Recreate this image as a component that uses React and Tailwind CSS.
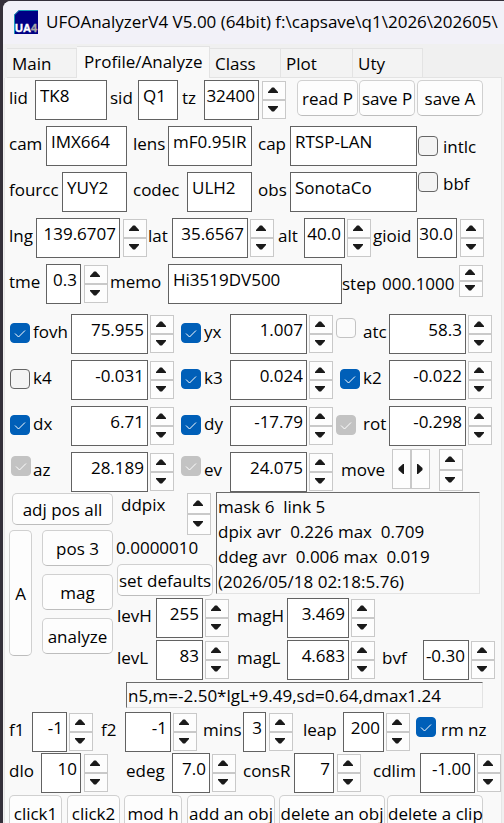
import { useId, useState } from "react";
import clsx from "clsx";

const Triangle = ({ dir }) => (
    <svg viewBox="0 0 10 6" className="w-[10px] h-[6px]" fill="#1a1a1a">
        {dir === "up" ? (
            <path d="M0 6V5L4 0.5H6L10 5V6Z" />
        ) : (
            <path d="M0 0V1L4 5.5H6L10 1V0Z" />
        )}
    </svg>
);

const spinButton =
    "flex-1 flex items-center justify-center bg-[#fdfdfd] border border-[#c9c9c9]";

const Spin = ({ name, onStep, className = "h-[38px]" }) => (
    <div className={clsx("flex flex-col w-6 shrink-0 mt-px", className)}>
        <button
            type="button"
            aria-label={`${name} up`}
            className={clsx(spinButton, "pb-[2px] pr-[2px]")}
            onClick={() => onStep?.(1)}
        >
            <Triangle dir="up" />
        </button>
        <button
            type="button"
            aria-label={`${name} down`}
            className={clsx(spinButton, "pb-[2px] pr-[2px]")}
            onClick={() => onStep?.(-1)}
        >
            <Triangle dir="down" />
        </button>
    </div>
);

const Row = ({ className, children }) => (
    <div className={clsx("flex items-start h-10 shrink-0", className)}>
        {children}
    </div>
);

const Field = ({ label, labelClass, inputClass, value }) => {
    const id = useId();
    return (
        <>
            <label
                htmlFor={id}
                className={clsx("shrink-0 pt-[6px]", labelClass)}
            >
                {label}
            </label>
            <input
                id={id}
                type="text"
                defaultValue={value}
                className={clsx(
                    "h-10 shrink-0 bg-white border border-[#626262] pb-[10px] pl-1 outline-none",
                    inputClass
                )}
            />
        </>
    );
};

const NumberField = ({
    label,
    labelClass,
    inputClass,
    value,
    spinClass = "ml-[2px]",
}) => {
    const inputId = useId();
    const [current, setCurrent] = useState(value);
    const decimals = (value.split(".")[1] ?? "").length;

    const step = (sign) => {
        const next = Number(current) + sign / 10 ** decimals;
        setCurrent(next.toFixed(decimals));
    };

    return (
        <>
            {labelClass && (
                <label
                    htmlFor={inputId}
                    className={clsx("shrink-0 pt-[6px]", labelClass)}
                >
                    {label}
                </label>
            )}
            <input
                id={inputId}
                type="text"
                aria-label={labelClass ? undefined : `${label} value`}
                value={current}
                onChange={(e) => setCurrent(e.target.value)}
                className={clsx(
                    "h-10 shrink-0 bg-white border border-[#626262] pb-[10px] pr-[3px] text-right outline-none",
                    inputClass
                )}
            />
            <div className={clsx("shrink-0", spinClass)}>
                <Spin name={label} onStep={step} />
            </div>
        </>
    );
};

const Check = ({
    label,
    checked = false,
    disabled = false,
    className,
    boxClass = "mt-[9px]",
    textClass = "ml-[3px] pt-[6px]",
}) => (
    <label className={clsx("flex items-start shrink-0", className)}>
        <span className={clsx("grid shrink-0", boxClass)}>
            <input
                type="checkbox"
                defaultChecked={checked}
                disabled={disabled}
                className="peer appearance-none col-start-1 row-start-1 size-5 rounded-[4px] border border-[#666] bg-[#f4f4f4] checked:border-[#005fb8] checked:bg-[#005fb8] disabled:border-[#c3c3c3] disabled:bg-[#fbfbfb] disabled:checked:bg-[#c3c3c3]"
            />
            <svg
                viewBox="0 0 20 20"
                className="col-start-1 row-start-1 size-5 pointer-events-none invisible peer-checked:visible"
                fill="none"
                stroke="#fff"
                strokeWidth="1"
            >
                <path d="M5 10.5L8.500 14L15 7.500" />
            </svg>
        </span>
        <span className={textClass}>{label}</span>
    </label>
);

const Button = ({ className, children }) => (
    <button
        type="button"
        className={clsx(
            "shrink-0 rounded-[5px] border border-[#d0d0d0] border-b-[#bdbdbd] bg-[#fdfdfd] pt-px text-center",
            className
        )}
    >
        {children}
    </button>
);

const Logo = () => (
    <svg viewBox="0 0 24 24" className="size-6 shrink-0">
        <path d="M5 0H24V24H0V5Z" fill="#000084" />
        <path d="M0.500 24V5L5 0.500H24" stroke="#1797b5" fill="none" />
        <text
            x="1"
            y="22"
            fontFamily="Liberation Sans"
            fontWeight="700"
            fontSize="11"
            fill="#fff"
            stroke="#fff"
            strokeWidth="0.400"
        >
            UA
            <tspan fill="#a8a8a8" stroke="#a8a8a8">
                4
            </tspan>
        </text>
    </svg>
);

const calibration = [
    [
        { label: "fovh", value: "75.955", checked: true },
        { label: "yx", value: "1.007", checked: true },
        { label: "atc", value: "58.3", disabled: true },
    ],
    [
        { label: "k4", value: "-0.031" },
        { label: "k3", value: "0.024", checked: true },
        { label: "k2", value: "-0.022", checked: true },
    ],
    [
        { label: "dx", value: "6.71", checked: true },
        { label: "dy", value: "-17.79", checked: true },
        { label: "rot", value: "-0.298", checked: true, disabled: true },
    ],
];

const columnClass = ["w-[62px] pl-px", "ml-[7px] w-[49px]", "ml-[3px] w-[53px]"];

const tabs = [
    { name: "Main", className: "w-[70px]" },
    { name: "Profile/Analyze", className: "w-[133px]", active: true },
    { name: "Class", className: "w-[71px]" },
    { name: "Plot", className: "w-[72px]" },
    { name: "Uty", className: "w-[70px]" },
];

const Tabs = () => (
    <div role="tablist" className="flex items-end h-8 pl-[3px]">
        {tabs.map((tab) => (
            <button
                key={tab.name}
                type="button"
                role="tab"
                aria-selected={!!tab.active}
                className={clsx(
                    "shrink-0 border-t border-r border-[#e3e3e3] text-left",
                    tab.active
                        ? "h-8 bg-[#f9f9f9] pl-[7px] pb-[2px]"
                        : "h-[30px] bg-[#f3f3f3] pl-[5px] pt-px border-b",
                    tab.className
                )}
            >
                {tab.name}
            </button>
        ))}
        <div className="flex-1 self-stretch border-b border-[#e3e3e3]" />
    </div>
);

const Station = () => (
    <div className="flex flex-col gap-[6px]">
        <Row>
            <Field label="lid" value="TK8" labelClass="w-[26px]" inputClass="w-[72px]" />
            <Field label="sid" value="Q1" labelClass="ml-[3px] w-7" inputClass="w-10" />
            <NumberField
                label="tz"
                value="32400"
                labelClass="ml-1 w-[22px]"
                inputClass="w-[55px]"
                spinClass="ml-[3px]"
            />
            <Button className="ml-[11px] w-[61px] h-9">read P</Button>
            <Button className="ml-px w-14 h-9">save P</Button>
            <Button className="ml-[2px] w-[66px] h-9">save A</Button>
        </Row>
        <Row>
            <Field label="cam" value="IMX664" labelClass="w-[37px]" inputClass="w-[81px]" />
            <Field label="lens" value="mF0.95IR" labelClass="ml-[6px] w-[35px]" inputClass="w-[84px]" />
            <Field label="cap" value="RTSP-LAN" labelClass="ml-[6px] w-8" inputClass="w-[127px]" />
            <Check
                label="intlc"
                className="ml-px"
                boxClass="mt-[10px]"
                textClass="ml-[5px] pt-[9px]"
            />
        </Row>
        <Row>
            <Field label="fourcc" value="YUY2" labelClass="w-[53px]" inputClass="w-[65px]" />
            <Field label="codec" value="ULH2" labelClass="ml-[6px] w-[54px]" inputClass="w-[65px]" />
            <Field label="obs" value="SonotaCo" labelClass="ml-[6px] w-8" inputClass="w-[127px]" />
            <Check label="bbf" className="ml-px" boxClass="" textClass="ml-[5px]" />
        </Row>
        <Row>
            <NumberField
                label="lng"
                value="139.6707"
                labelClass="w-[27px]"
                inputClass="w-[84px]"
                spinClass="ml-[3px]"
            />
            <NumberField label="lat" value="35.6567" labelClass="ml-px w-6" inputClass="w-[76px]" />
            <NumberField label="alt" value="40.0" labelClass="ml-1 w-[26px]" inputClass="w-[41px]" />
            <NumberField
                label="gioid"
                value="30.0"
                labelClass="ml-[2px] w-11"
                inputClass="w-10"
                spinClass="ml-[3px]"
            />
        </Row>
        <Row>
            <NumberField
                label="tme"
                value="0.3"
                labelClass="w-[37px]"
                inputClass="w-[35px]"
                spinClass="ml-[3px]"
            />
            <Field label="memo" value="Hi3519DV500" labelClass="ml-[2px] w-[58px]" inputClass="w-[174px]" />
            <span className="w-10 shrink-0 pt-2">step</span>
            <output className="w-[77px] shrink-0 pt-2">000.1000</output>
            <Spin name="step" className="h-8" />
        </Row>
    </div>
);

const Calibration = () => (
    <div className="mt-[10px] flex flex-col gap-[6px]">
        {calibration.map((row, i) => (
            <Row key={i}>
                {row.map((item, j) => (
                    <div key={item.label} className="flex items-start shrink-0">
                        <Check
                            label={item.label}
                            checked={item.checked}
                            disabled={item.disabled}
                            className={clsx(
                                columnClass[j],
                                item.label === "k2" && "pl-1"
                            )}
                            boxClass={item.label === "atc" ? "mt-1" : "mt-[9px]"}
                            textClass={clsx(
                                "pt-[6px]",
                                item.disabled ? "ml-[7px]" : "ml-[3px]"
                            )}
                        />
                        <NumberField
                            label={item.label}
                            value={item.value}
                            inputClass="w-[77px]"
                        />
                    </div>
                ))}
            </Row>
        ))}
        <Row>
            <Check
                label="az"
                checked
                disabled
                className="w-[62px] pl-[2px]"
                boxClass="mt-1"
                textClass="ml-[2px] pt-[6px]"
            />
            <NumberField label="az" value="28.189" inputClass="w-[77px]" />
            <Check
                label="ev"
                checked
                disabled
                className="ml-[7px] w-[49px]"
                boxClass="mt-1"
            />
            <NumberField label="ev" value="24.075" inputClass="w-[77px]" />
            <span className="ml-2 w-[51px] shrink-0 pt-[6px]">move</span>
            <div className="-mt-[3px] flex h-10 w-[38px] shrink-0">
                <button
                    type="button"
                    aria-label="move left"
                    className={clsx(spinButton, "pr-px")}
                >
                    <svg viewBox="0 0 6 10" className="h-[10px] w-[6px]" fill="#1a1a1a">
                        <path d="M6 0H5L0.500 4V6L5 10H6Z" />
                    </svg>
                </button>
                <button
                    type="button"
                    aria-label="move right"
                    className={clsx(spinButton, "pr-px")}
                >
                    <svg viewBox="0 0 6 10" className="h-[10px] w-[6px]" fill="#1a1a1a">
                        <path d="M0 0H1L5.500 4V6L1 10H0Z" />
                    </svg>
                </button>
            </div>
            <div className="-mt-1 ml-[9px]">
                <Spin name="move" className="h-[42px]" />
            </div>
        </Row>
    </div>
);

const report = `mask 6  link 5
dpix avr  0.226 max  0.709
ddeg avr  0.006 max  0.019
(2026/05/18 02:18:5.76)`;

const Adjust = () => (
    <div className="flex items-start">
        <div className="flex w-[104px] shrink-0 flex-col gap-[5px] pt-px">
            <Button className="ml-[3px] h-8">adj pos all</Button>
            <div className="flex justify-between">
                <Button className="w-[23px] h-[126px]">A</Button>
                <div className="flex w-[71px] flex-col gap-2">
                    <Button className="h-9">pos 3</Button>
                    <Button className="h-9">mag</Button>
                    <Button className="h-9">analyze</Button>
                </div>
            </div>
        </div>
        <div className="flex flex-1 flex-col">
            <div className="flex items-start">
                <div className="flex w-[103px] shrink-0 flex-col pl-[3px]">
                    <div className="flex h-11 items-start justify-between px-[5px]">
                        <span className="pt-px">ddpix</span>
                        <Spin name="ddpix" className="h-[42px]" />
                    </div>
                    <output className="h-7">0.0000010</output>
                    <Button className="ml-px h-8 w-24">set defaults</Button>
                </div>
                <div className="mr-[21px] h-[102px] flex-1 whitespace-pre border border-[#e3e3e3] border-t-[#6b6b6b] border-l-[#6b6b6b] pl-px pt-px leading-[25px]">
                    {report}
                </div>
            </div>
            <div className="mt-[2px] flex flex-col gap-[2px] pl-1">
                <Row>
                    <NumberField label="levH" value="255" labelClass="w-[39px]" inputClass="w-[47px]" />
                    <NumberField label="magH" value="3.469" labelClass="ml-2 w-[50px]" inputClass="w-[62px]" />
                </Row>
                <Row>
                    <NumberField label="levL" value="83" labelClass="w-[39px]" inputClass="w-[47px]" />
                    <NumberField label="magL" value="4.683" labelClass="ml-2 w-[50px]" inputClass="w-[62px]" />
                    <NumberField label="bvf" value="-0.30" labelClass="ml-[7px] w-[41px]" inputClass="w-[46px]" />
                </Row>
            </div>
        </div>
    </div>
);

const Detection = () => (
    <div>
        <div className="ml-[117px] mr-[18px] mt-[2px] h-[26px] whitespace-nowrap border border-[#e3e3e3] border-t-[#6b6b6b] border-l-[#6b6b6b] pl-px pt-px">
            n5,m=-2.50*lgL+9.49,sd=0.64,dmax1.24
        </div>
        <Row className="mt-1">
            <NumberField label="f1" value="-1" labelClass="w-[23px]" inputClass="w-[35px]" />
            <NumberField label="f2" value="-1" labelClass="ml-2 w-6" inputClass="w-[46px]" />
            <NumberField
                label="mins"
                value="3"
                labelClass="ml-[6px] w-10"
                inputClass="w-[23px]"
                spinClass="ml-[3px]"
            />
            <NumberField label="leap" value="200" labelClass="ml-[10px] w-10" inputClass="w-[41px]" />
            <Check
                label="rm nz"
                checked
                className="ml-[6px]"
                boxClass="mt-[5px]"
                textClass="ml-[5px] pt-[6px]"
            />
        </Row>
        <Row className="mt-px">
            <NumberField
                label="dlo"
                value="10"
                labelClass="w-8"
                inputClass="w-10"
                spinClass="ml-[3px]"
            />
            <NumberField label="edeg" value="7.0" labelClass="ml-[18px] w-[46px]" inputClass="w-[38px]" />
            <NumberField
                label="consR"
                value="7"
                labelClass="ml-[7px] w-[51px]"
                inputClass="w-10"
                spinClass="ml-[3px]"
            />
            <NumberField label="cdlim" value="-1.00" labelClass="ml-3 w-[47px]" inputClass="w-[55px]" />
        </Row>
        <Row className="mt-[2px]">
            <Button className="w-[53px] h-9">click1</Button>
            <Button className="ml-[5px] w-[53px] h-9">click2</Button>
            <Button className="ml-1 w-[58px] h-9">mod h</Button>
            <Button className="ml-[5px] w-[88px] h-9">add an obj</Button>
            <Button className="ml-1 w-[106px] h-9">delete an obj</Button>
            <Button className="ml-[2px] w-24 h-9">delete a clip</Button>
        </Row>
    </div>
);

const App = () => (
    <div className="h-screen overflow-hidden bg-[#34303a] pl-[3px] pt-px font-['Open_Sans','Noto_Sans',sans-serif] text-[17px] leading-6 text-black">
        <div className="flex min-h-full flex-col overflow-hidden rounded-tl-lg bg-[#f0f0f0]">
            <header className="flex h-[43px] shrink-0 items-center gap-2 overflow-hidden whitespace-nowrap bg-[#f2f1f8] pb-px pl-[11px]">
                <Logo />
                <h1>UFOAnalyzerV4 V5.00 (64bit) f:\capsave\q1\2026\202605\</h1>
            </header>
            <main className="mr-[2px] mt-[2px] flex flex-1 flex-col pl-px">
                <Tabs />
                <div className="flex-1 overflow-hidden whitespace-nowrap border-x border-[#e6e6e6] bg-[#f9f9f9] pl-1 pt-[2px]">
                    <Station />
                    <Calibration />
                    <Adjust />
                    <Detection />
                </div>
            </main>
        </div>
    </div>
);

export default App;
